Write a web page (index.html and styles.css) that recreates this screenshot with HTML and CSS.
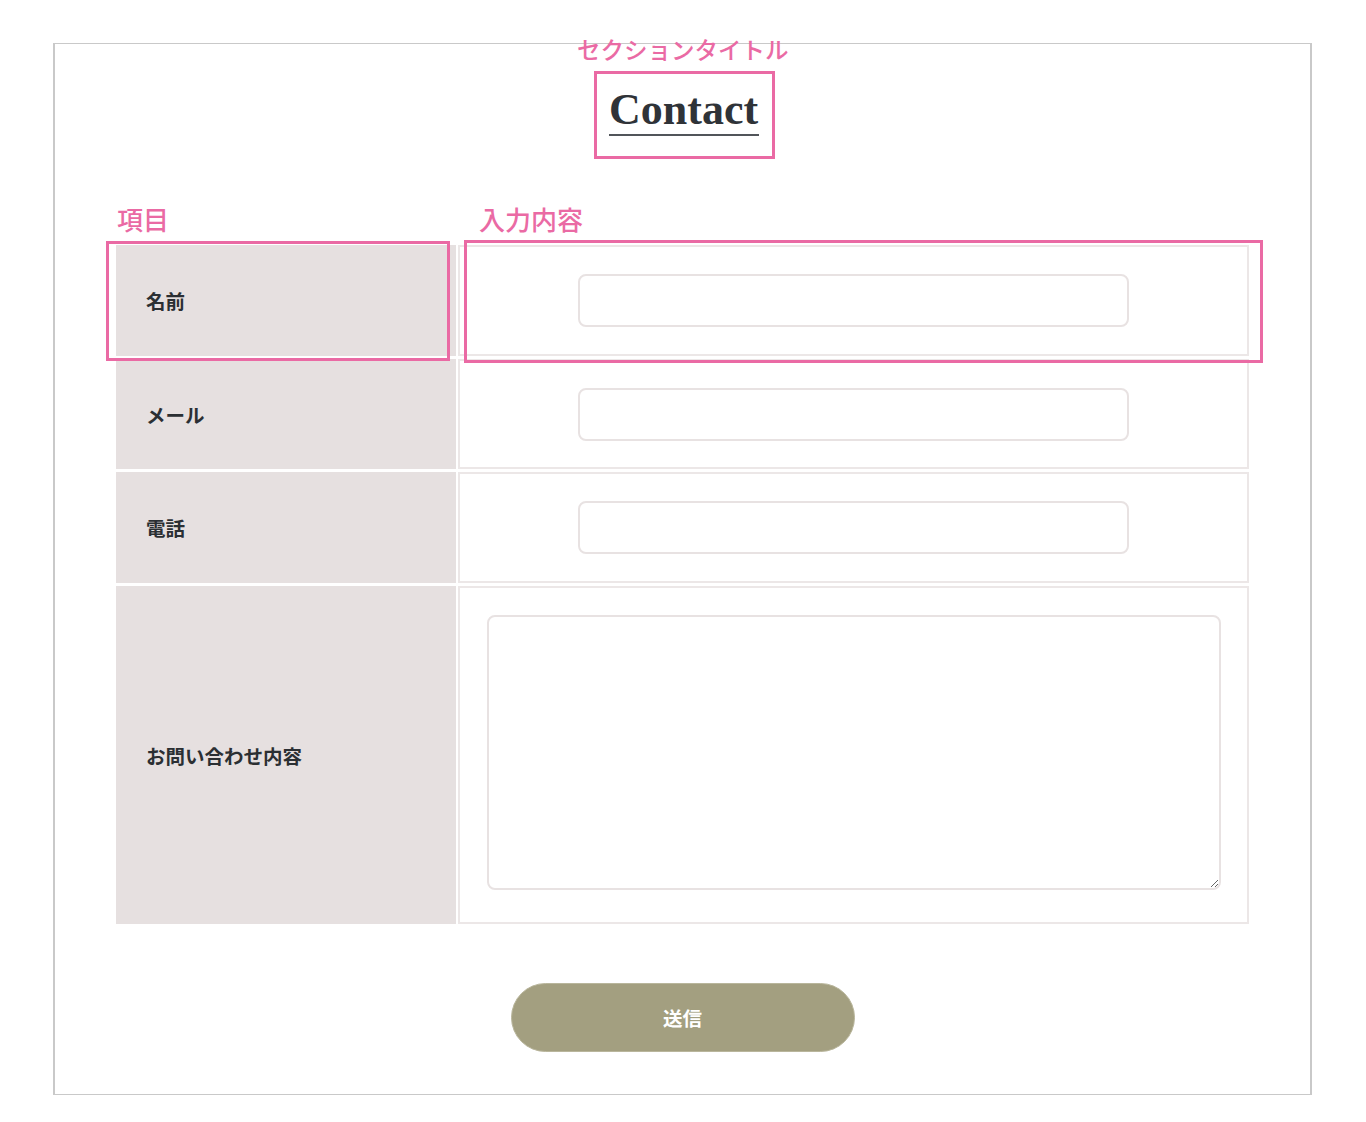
FILE: index.html
```html
<!DOCTYPE html>
<html lang="ja">
<head>
<meta charset="utf-8">
<title>Contact</title>
<link rel="stylesheet" href="styles.css">
</head>
<body>
<div class="frame">
  <div class="title-wrap">
    <h2 class="title"><span class="title-text">Contact</span></h2>
  </div>
  <form class="form">
    <div class="grid">
      <div class="label">名前</div>
      <div class="field"><input class="input" type="text"></div>
      <div class="label">メール</div>
      <div class="field"><input class="input" type="email"></div>
      <div class="label">電話</div>
      <div class="field"><input class="input" type="tel"></div>
      <div class="label">お問い合わせ内容</div>
      <div class="field field-area"><textarea class="textarea"></textarea></div>
    </div>
    <div class="actions">
      <button class="submit" type="button">送信</button>
    </div>
  </form>
</div>

<div class="note note-section">セクションタイトル</div>
<div class="note note-item">項目</div>
<div class="note note-input">入力内容</div>
<div class="mark mark-item"></div>
<div class="mark mark-input"></div>
</body>
</html>
```

FILE: styles.css
```css
* { box-sizing: border-box; }

html, body {
  margin: 0;
  padding: 0;
  background: #ffffff;
}

body {
  font-family: "Noto Sans CJK JP", "Noto Sans", sans-serif;
  color: #2b2f33;
  width: 1366px;
  min-height: 1122px;
  padding-top: 43px;
}

.frame {
  width: 1259px;
  margin-left: 53px;
  border-top: 1px solid #c9c9c9;
  border-bottom: 1px solid #c9c9c9;
  border-left: 2px solid #c9c9c9;
  border-right: 2px solid #c9c9c9;
  padding: 27px 0 42px;
}

.title-wrap {
  display: flex;
  justify-content: center;
  padding-left: 4px;
}

.title {
  margin: 0;
  border: 3px solid #ea6aa4;
  padding: 14px 13px 20px 12px;
  width: 181px;
  height: 88px;
}

.title-text {
  display: block;
  font-family: "Liberation Serif", "Times New Roman", serif;
  font-weight: bold;
  font-size: 44px;
  line-height: 44px;
  color: #2f3338;
  text-align: left;
  white-space: nowrap;
  padding-bottom: 2px;
  border-bottom: 2px solid #51555a;
}

.form {
  margin: 86px 0 0;
}

.grid {
  width: 1133px;
  margin: 0 auto;
  display: grid;
  grid-template-columns: 340px 791px;
  grid-template-rows: 111px 110px 111px 338px;
  column-gap: 2px;
  row-gap: 3px;
}

.label {
  background: #e6e0e0;
  display: flex;
  align-items: center;
  padding-left: 30px;
  font-size: 19.5px;
  font-weight: bold;
  color: #2b2f33;
}

.field {
  border: 2px solid #ece7e7;
  background: #fff;
  display: flex;
  align-items: center;
  justify-content: center;
}

.field-area {
  align-items: flex-start;
  padding: 27px 0 32px;
}

.input {
  width: 551px;
  height: 53px;
  border: 2px solid #e8e2e2;
  border-radius: 8px;
  background: #fff;
  outline: none;
  font-size: 16px;
}

.textarea {
  width: 734px;
  height: 275px;
  border: 2px solid #e8e2e2;
  border-radius: 8px;
  background: #fff;
  outline: none;
  font-size: 16px;
  display: block;
}

.actions {
  display: flex;
  justify-content: center;
  margin-top: 59px;
}

.submit {
  width: 344px;
  height: 69px;
  border-radius: 35px;
  background: #a39f80;
  border: 1px solid #b9b69c;
  color: #ffffff;
  font-family: "Noto Sans CJK JP", "Noto Sans", sans-serif;
  font-size: 19.5px;
  font-weight: bold;
  cursor: pointer;
}

/* annotation overlays */
.note {
  position: absolute;
  color: #ea6aa4;
  font-family: "Noto Sans CJK JP", "Noto Sans", sans-serif;
  font-weight: 500;
  line-height: 1;
  white-space: nowrap;
}

.note-section {
  left: 577px;
  top: 38px;
  font-size: 23.5px;
}

.note-item {
  left: 117px;
  top: 206px;
  font-size: 26px;
}

.note-input {
  left: 479px;
  top: 206px;
  font-size: 26px;
}

.mark {
  position: absolute;
  border: 3px solid #ea6aa4;
}

.mark-item {
  left: 106px;
  top: 241px;
  width: 344px;
  height: 120px;
}

.mark-input {
  left: 464px;
  top: 240px;
  width: 799px;
  height: 123px;
}
```
